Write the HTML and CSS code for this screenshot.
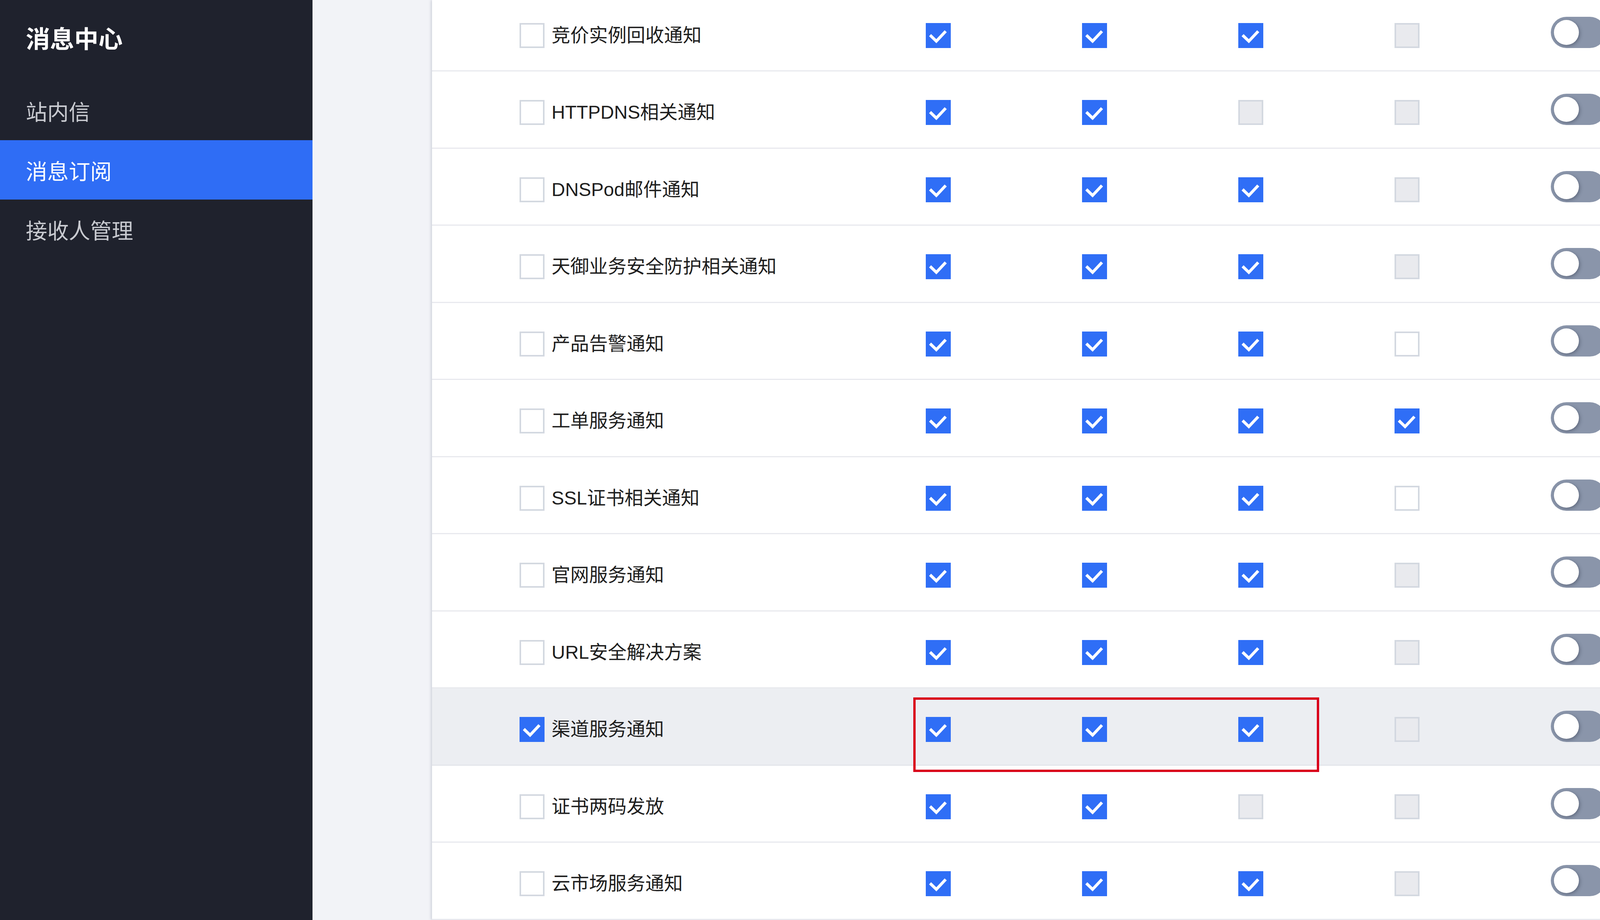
FILE: index.html
```html
<!DOCTYPE html>
<html lang="zh-CN">
<head>
<meta charset="utf-8">
<title>消息订阅</title>
<link rel="stylesheet" href="styles.css">
</head>
<body>
<div class="app">
  <aside class="sidebar">
    <div class="side-title">消息中心</div>
    <nav class="menu">
      <div class="menu-item">站内信</div>
      <div class="menu-item active">消息订阅</div>
      <div class="menu-item">接收人管理</div>
    </nav>
  </aside>
  <div class="gutter"></div>
  <main class="card">
    <div class="list" id="list"></div>
  </main>
</div>
<script src="app.js"></script>
</body>
</html>
```

FILE: styles.css
```css
* { box-sizing: border-box; }
html, body { margin: 0; padding: 0; }
body {
  width: 4292px;
  height: 2356px;
  overflow: hidden;
  background: #f2f3f7;
  font-family: "Liberation Sans", "Noto Sans CJK SC", sans-serif;
}
.app {
  display: flex;
  height: 2356px;
}
.sidebar {
  width: 800px;
  flex: none;
  background: #1f222d;
  display: flex;
  flex-direction: column;
}
.side-title {
  height: 207px;
  padding: 58px 0 0 66px;
  font-family: "Noto Sans CJK SC", sans-serif;
  font-weight: 700;
  font-size: 62px;
  line-height: 76px;
  color: #ffffff;
}
.menu { display: flex; flex-direction: column; }
.menu-item {
  height: 152px;
  display: flex;
  align-items: center;
  padding-left: 66px;
  font-family: "Noto Sans CJK SC", sans-serif;
  font-size: 55px;
  color: #c8cad0;
}
.menu-item.active {
  background: #2f6df5;
  color: #ffffff;
}
.gutter {
  width: 306px;
  flex: none;
}
.card {
  flex: 1;
  background: #ffffff;
  box-shadow: -3px 0 6px rgba(120, 130, 150, 0.28);
  overflow: hidden;
}
.list {
  margin-top: -14.5px;
}
.row {
  position: relative;
  height: 197.5px;
  border-bottom: 3px solid #e8e9ee;
  display: grid;
  grid-template-columns: 1040px 400px 400px 400px 400px 140px;
  align-items: center;
  padding-left: 224px;
}
.row.hl {
  background: #eceef2;
  border-bottom-color: #e3e5ea;
}
.cell {
  padding-top: 16px;
  display: flex;
  align-items: center;
}
.name {
  gap: 18px;
  font-size: 48px;
  color: #1e1e1e;
  line-height: 64px;
}
.cb {
  width: 64px;
  height: 64px;
  flex: none;
  border: 4px solid #d3d8e0;
  background: #ffffff;
  display: flex;
  align-items: center;
  justify-content: center;
}
.cb.dis {
  background: #e9eaee;
  border-color: #d3d8e0;
}
.cb.on {
  background: #2f6ef6;
  border-color: #2f6ef6;
  border-width: 0;
}
.cb.on svg { width: 64px; height: 64px; display: block; }
.toggle {
  position: relative;
  width: 140px;
  height: 80px;
  border-radius: 40px;
  background: #8a95aa;
}
.knob {
  position: absolute;
  left: 8px;
  top: 8px;
  width: 64px;
  height: 64px;
  border-radius: 50%;
  background: #ffffff;
  box-shadow: 3px 3px 9px rgba(50, 60, 80, 0.45);
}
.mark {
  position: absolute;
  left: 1232px;
  top: 23px;
  width: 1039px;
  height: 191px;
  border: 6px solid #d9001b;
  pointer-events: none;
  z-index: 2;
}
```

FILE: app.js
```js
(function () {
  var rows = [
    ["竞价实例回收通知", 0, ["on","on","on","dis"]],
    ["HTTPDNS相关通知", 0, ["on","on","dis","dis"]],
    ["DNSPod邮件通知", 0, ["on","on","on","dis"]],
    ["天御业务安全防护相关通知", 0, ["on","on","on","dis"]],
    ["产品告警通知", 0, ["on","on","on","off"]],
    ["工单服务通知", 0, ["on","on","on","on"]],
    ["SSL证书相关通知", 0, ["on","on","on","off"]],
    ["官网服务通知", 0, ["on","on","on","dis"]],
    ["URL安全解决方案", 0, ["on","on","on","dis"]],
    ["渠道服务通知", 1, ["on","on","on","dis"]],
    ["证书两码发放", 0, ["on","on","dis","dis"]],
    ["云市场服务通知", 0, ["on","on","on","dis"]]
  ];
  var check = '<svg viewBox="0 0 64 64"><polyline points="11,31 27,46.5 51,21" fill="none" stroke="#fff" stroke-width="7.5" stroke-linejoin="miter"/></svg>';
  function cb(state) {
    if (state === "on") return '<span class="cb on">' + check + '</span>';
    if (state === "dis") return '<span class="cb dis"></span>';
    return '<span class="cb"></span>';
  }
  var html = "";
  rows.forEach(function (r) {
    var hl = r[1] === 1;
    html += '<div class="row' + (hl ? ' hl' : '') + '">';
    html += '<div class="cell name">' + cb(hl ? "on" : "off") + '<span>' + r[0] + '</span></div>';
    r[2].forEach(function (s) { html += '<div class="cell">' + cb(s) + '</div>'; });
    html += '<div class="toggle"><span class="knob"></span></div>';
    if (hl) html += '<div class="mark"></div>';
    html += '</div>';
  });
  document.getElementById("list").innerHTML = html;
})();
```
